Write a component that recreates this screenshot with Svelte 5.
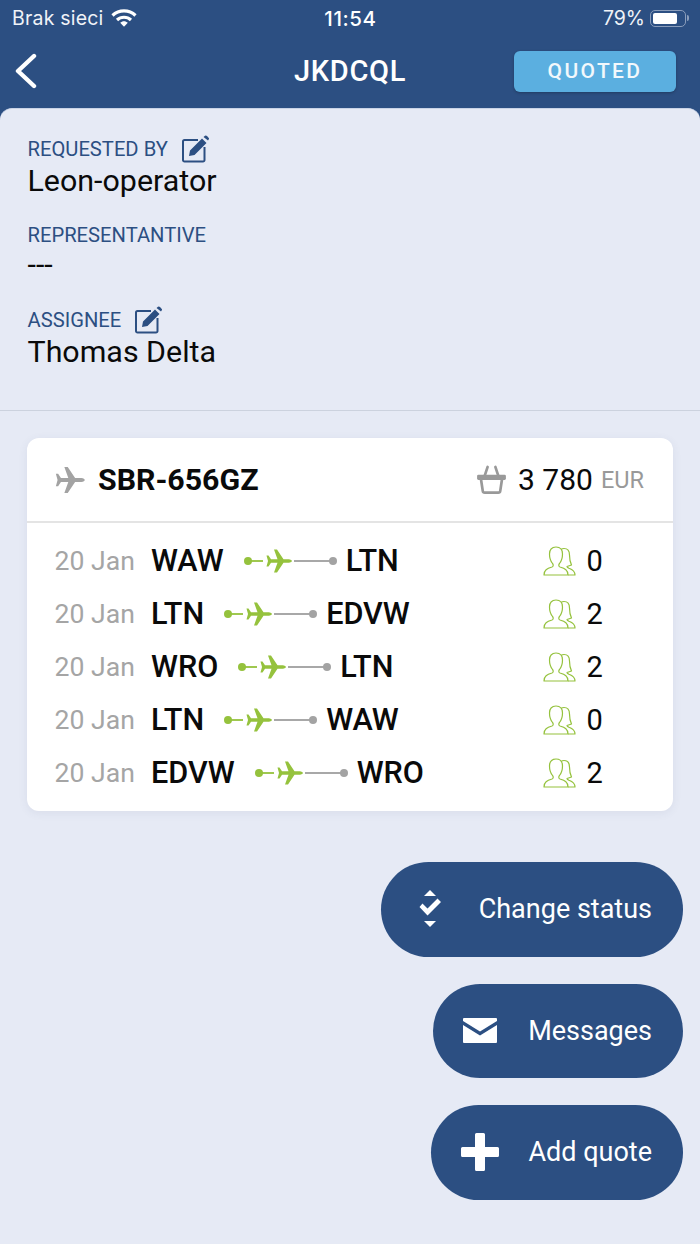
<script>
  const legs = [
    { date: "20 Jan", from: "WAW", to: "LTN", pax: 0 },
    { date: "20 Jan", from: "LTN", to: "EDVW", pax: 2 },
    { date: "20 Jan", from: "WRO", to: "LTN", pax: 2 },
    { date: "20 Jan", from: "LTN", to: "WAW", pax: 0 },
    { date: "20 Jan", from: "EDVW", to: "WRO", pax: 2 },
  ];
  // 26x23 box, nose to the right
  const plane = "M8 0 H11 L17.5 9.8 H23 Q26 10.2 26 11.5 Q26 12.8 23 13.2 H17.5 L11 23 H8 L11.5 13.2 H5 L2.5 17 H.5 L2 11.5 L.5 6 H2.5 L5 9.8 H11.5 Z";
</script>

<div class="screen">
  <header class="top">
    <div class="status">
      <div class="status-left">
        <span>Brak sieci</span>
        <svg class="wifi" viewBox="0 0 26 18" fill="none" stroke="#fff" stroke-width="3.200">
          <path d="M1.500 6.500 C8 .3 18 .3 24.500 6.500"/>
          <path d="M6 11 C10 7.300 16 7.300 20 11"/>
          <path d="M9.200 13.700 L13 17.800 L16.800 13.700 C14.600 11.600 11.400 11.600 9.200 13.700 Z" fill="#fff" stroke="none"/>
        </svg>
      </div>
      <span class="clock">11:54</span>
      <div class="status-right">
        <span>79%</span>
        <span class="battery"><span class="battery-fill"></span></span>
        <span class="battery-tip"></span>
      </div>
    </div>
    <nav class="nav">
      <svg class="back" viewBox="0 0 22 36" fill="none" stroke="#fff" stroke-width="4.400" stroke-linecap="round" stroke-linejoin="round">
        <path d="M19 3 L3 18 L19 33"/>
      </svg>
      <h1>JKDCQL</h1>
      <span class="badge">QUOTED</span>
    </nav>
  </header>

  <main class="sheet">
    <section class="info">
      <div class="field">
        <div class="label">REQUESTED BY
          <svg class="edit" viewBox="0 0 28 28">
            <path d="M17 5 H3.500 A1.500 1.500 0 0 0 2 6.500 V25 A1.500 1.500 0 0 0 3.500 26.500 H22 A1.500 1.500 0 0 0 23.500 25 V12" fill="none" stroke="#2c4f82" stroke-width="2"/>
            <path d="M9 15.500 L21 3.500 L25.500 8 L13.500 20 L8 21 Z M22.500 2 L24 .8 Q25 .2 26 1 L27.800 2.900 Q28.400 3.800 27.600 4.600 L27 5.500 Z" fill="#2c4f82"/>
          </svg>
        </div>
        <div class="value">Leon-operator</div>
      </div>
      <div class="field">
        <div class="label">REPRESENTANTIVE</div>
        <div class="value dashes">---</div>
      </div>
      <div class="field">
        <div class="label">ASSIGNEE
          <svg class="edit" viewBox="0 0 28 28">
            <path d="M17 5 H3.500 A1.500 1.500 0 0 0 2 6.500 V25 A1.500 1.500 0 0 0 3.500 26.500 H22 A1.500 1.500 0 0 0 23.500 25 V12" fill="none" stroke="#2c4f82" stroke-width="2"/>
            <path d="M9 15.500 L21 3.500 L25.500 8 L13.500 20 L8 21 Z M22.500 2 L24 .8 Q25 .2 26 1 L27.800 2.900 Q28.400 3.800 27.600 4.600 L27 5.500 Z" fill="#2c4f82"/>
          </svg>
        </div>
        <div class="value">Thomas Delta</div>
      </div>
    </section>

    <section class="card">
      <div class="card-head">
        <svg class="head-plane" viewBox="0 0 26 23" fill="#a3a3a3"><path d={plane}/></svg>
        <span class="callsign">SBR-656GZ</span>
        <svg class="basket" viewBox="0 0 30 30" fill="none" stroke="#999" stroke-width="2.800" stroke-linejoin="round" stroke-linecap="round">
          <path d="M1.500 11.500 H28.500 V14 H1.500 Z"/>
          <path d="M4 14 L6 27 Q6.200 28.500 8 28.500 H22 Q23.800 28.500 24 27 L26 14"/>
          <path d="M8 11 L11 2 M22 11 L19 2"/>
        </svg>
        <span class="price">3 780</span>
        <span class="currency">EUR</span>
      </div>
      <div class="legs">
        {#each legs as leg}
          <div class="leg">
            <span class="date">{leg.date}</span>
            <span class="route">
              <b>{leg.from}</b>
              <svg class="track" viewBox="0 0 93 24">
                <circle cx="4" cy="12" r="4" fill="#95c23d"/>
                <path d="M4 12 H19" stroke="#95c23d" stroke-width="1.800"/>
                <g transform="translate(22 .5)" fill="#95c23d"><path d={plane}/></g>
                <path d="M50 12 H89" stroke="#a8a8a8" stroke-width="1.800"/>
                <circle cx="89" cy="12" r="4" fill="#a3a3a3"/>
              </svg>
              <b>{leg.to}</b>
            </span>
            <svg class="pax" viewBox="0 0 33 30" fill="none" stroke="#95c23d" stroke-width="1.200" stroke-linejoin="round">
              <path d="M1 29 C1 24 4 22.500 9 21 C10.500 20.500 10.500 18.500 9.500 17.500 C7.500 15 6.500 12 6.500 8 C6.500 3.500 9 1 13 1 C17 1 19.500 3.500 19.500 8 C19.500 12 18.500 15 16.500 17.500 C15.500 18.500 15.500 20.500 17 21 C22 22.500 25 24 25 29 Z"/>
              <path d="M18 3.500 C19 2.800 20 2.500 21 2.500 C25 2.500 26.500 5.500 26.500 9 C26.500 13 27 16 28.500 19 L24 20.500 C24 21.500 25 21.800 26 22.200 C29.500 23.500 32 25 32 29 H25"/>
            </svg>
            <span class="count">{leg.pax}</span>
          </div>
        {/each}
      </div>
    </section>

    <div class="actions">
      <button class="action status-btn">
        <svg class="ico" viewBox="0 0 24 38" fill="#fff">
          <path d="M12 0 L18 6 H6 Z"/>
          <path d="M2 17 L5 13.500 L10 18.500 L20 8.500 L23.500 12 L10 25.500 Z" transform="translate(-0.500 0)"/>
          <path d="M6 31 H18 L12 37 Z"/>
        </svg>
        <span>Change status</span>
      </button>
      <button class="action msg-btn">
        <svg class="ico" viewBox="0 0 34 25" fill="#fff">
          <path d="M1 0 H33 Q34 0 34 1 V3 L17 13.500 L0 3 V1 Q0 0 1 0 Z"/>
          <path d="M0 7 L17 17.500 L34 7 V24 Q34 25 33 25 H1 Q0 25 0 24 Z"/>
        </svg>
        <span>Messages</span>
      </button>
      <button class="action add-btn">
        <svg class="ico" viewBox="0 0 38 38" fill="#fff">
          <path d="M14 1.500 Q14 0 15.500 0 H22.500 Q24 0 24 1.500 V14 H36.500 Q38 14 38 15.500 V22.500 Q38 24 36.500 24 H24 V36.500 Q24 38 22.500 38 H15.500 Q14 38 14 36.500 V24 H1.500 Q0 24 0 22.500 V15.500 Q0 14 1.500 14 H14 Z"/>
        </svg>
        <span>Add quote</span>
      </button>
    </div>
  </main>
</div>

<style>
  :global(body) {
    margin: 0;
    background: #2c4f82;
  }

  .screen {
    width: 700px;
    height: 1244px;
    display: flex;
    flex-direction: column;
    overflow: hidden;
    font-family: Roboto, sans-serif;
    background: #2c4f82;
  }

  /* ── Header ─────────────────────────────── */
  .top {
    height: 108px;
    flex: none;
    color: #fff;
  }

  .status {
    height: 36px;
    padding: 0 11px 0 12px;
    display: grid;
    grid-template-columns: 1fr auto 1fr;
    align-items: center;
    font-family: Inter, sans-serif;
    font-size: 19.500px;
  }

  .status-left {
    display: flex;
    align-items: center;
    gap: 8px;
    color: #f0f3f8;
    letter-spacing: 0.2px;
  }

  .wifi {
    width: 26px;
    height: 18px;
    margin-top: -1px;
  }

  .clock {
    font-size: 20.500px;
    font-weight: 500;
    letter-spacing: 0.6px;
  }

  .status-right {
    display: flex;
    align-items: center;
    justify-content: flex-end;
    color: #f0f3f8;
  }

  .battery {
    width: 36px;
    height: 17px;
    margin-left: 5px;
    padding: 2px;
    box-sizing: border-box;
    display: block;
    border: 1.500px solid #8a9dbb;
    border-radius: 5px;
  }

  .battery-fill {
    display: block;
    width: 24px;
    height: 100%;
    background: #fff;
    border-radius: 2px;
  }

  .battery-tip {
    width: 2px;
    height: 6px;
    margin-left: 1px;
    background: #8a9dbb;
    border-radius: 0 2px 2px 0;
  }

  .nav {
    height: 72px;
    padding: 0 24px;
    display: grid;
    grid-template-columns: 1fr auto 1fr;
    align-items: center;
  }

  .back {
    width: 22px;
    height: 36px;
    margin: 0 0 2px -9px;
  }

  h1 {
    margin: 0 0 2px;
    font-size: 29px;
    font-weight: 500;
    letter-spacing: 0.7px;
  }

  .badge {
    justify-self: end;
    width: 162px;
    height: 41px;
    margin-bottom: 2px;
    display: flex;
    align-items: center;
    justify-content: center;
    background: #5bafe0;
    border-radius: 6px;
    box-shadow: 0 1px 3px rgba(0, 0, 0, 0.25);
    font-size: 21px;
    font-weight: 500;
    letter-spacing: 2.400px;
    color: #f2f8fc;
  }

  /* ── Sheet ──────────────────────────────── */
  .sheet {
    flex: 1;
    background: #e6eaf5;
    border-radius: 12px 12px 0 0;
    border-top: 1px solid #c9d3e6;
    box-sizing: border-box;
  }

  .info {
    height: 302px;
    box-sizing: border-box;
    padding: 25px 27.500px 0;
    border-bottom: 1px solid #ccd2de;
  }

  .field {
    height: 85.500px;
  }

  .label {
    height: 30px;
    display: flex;
    align-items: center;
    gap: 13px;
    font-size: 20.200px;
    color: #2c4f82;
  }

  .edit {
    width: 28px;
    height: 28px;
    margin-top: -1px;
  }

  .value {
    margin-top: -1.500px;
    font-size: 30.400px;
    line-height: 36px;
    color: #0a0a0a;
  }

  .dashes {
    margin-top: -3px;
  }

  .card {
    margin: 27px 27px 0;
    height: 373px;
    background: #fff;
    border-radius: 12px;
    box-shadow: 0 2px 10px rgba(60, 80, 120, 0.08);
  }

  .card-head {
    height: 85px;
    box-sizing: border-box;
    padding: 0 29px 0 28px;
    display: flex;
    align-items: center;
    border-bottom: 2px solid #e4e4e4;
  }

  .head-plane {
    width: 30px;
    height: 26px;
  }

  .callsign {
    margin-left: 13px;
    font-size: 30.300px;
    font-weight: 700;
    color: #0a0a0a;
    flex: 1;
  }

  .basket {
    width: 29px;
    height: 29px;
    margin-right: 12px;
  }

  .price {
    font-size: 30px;
    color: #0a0a0a;
  }

  .currency {
    margin-left: 8px;
    font-size: 23.500px;
    color: #999;
  }

  .legs {
    padding-top: 11px;
  }

  .leg {
    height: 53px;
    padding: 0 27.500px;
    display: flex;
    align-items: center;
  }

  .date {
    width: 97px;
    flex: none;
    font-size: 26.600px;
    color: #a5a5a5;
  }

  .route {
    width: 392px;
    flex: none;
    display: flex;
    align-items: center;
    margin-left: -0.500px;
  }

  .route b {
    font-size: 30.600px;
    font-weight: 500;
    color: #0a0a0a;
  }

  .track {
    width: 93px;
    height: 24px;
    margin: 0 9px 0 20px;
  }

  .pax {
    width: 33px;
    height: 30px;
    flex: none;
  }

  .count {
    margin-left: 10.500px;
    font-size: 29px;
    color: #0a0a0a;
  }

  /* ── Buttons ────────────────────────────── */
  .actions {
    margin-top: 51px;
    padding-right: 17px;
    display: flex;
    flex-direction: column;
    align-items: flex-end;
    gap: 27px;
  }

  .action {
    height: 94.500px;
    border: none;
    border-radius: 48px;
    background: #2c4f82;
    color: #fff;
    font-family: Roboto, sans-serif;
    font-size: 27px;
    display: flex;
    align-items: center;
    padding: 0;
  }

  .action span {
    margin-left: auto;
    padding-right: 31px;
  }

  .status-btn { width: 302px; padding-left: 37px; }
  .status-btn .ico { width: 24px; height: 38px; }
  .msg-btn { width: 250px; padding-left: 30px; }
  .msg-btn .ico { width: 34px; height: 25px; }
  .add-btn { width: 252px; padding-left: 30px; }
  .add-btn .ico { width: 38px; height: 38px; }
</style>
